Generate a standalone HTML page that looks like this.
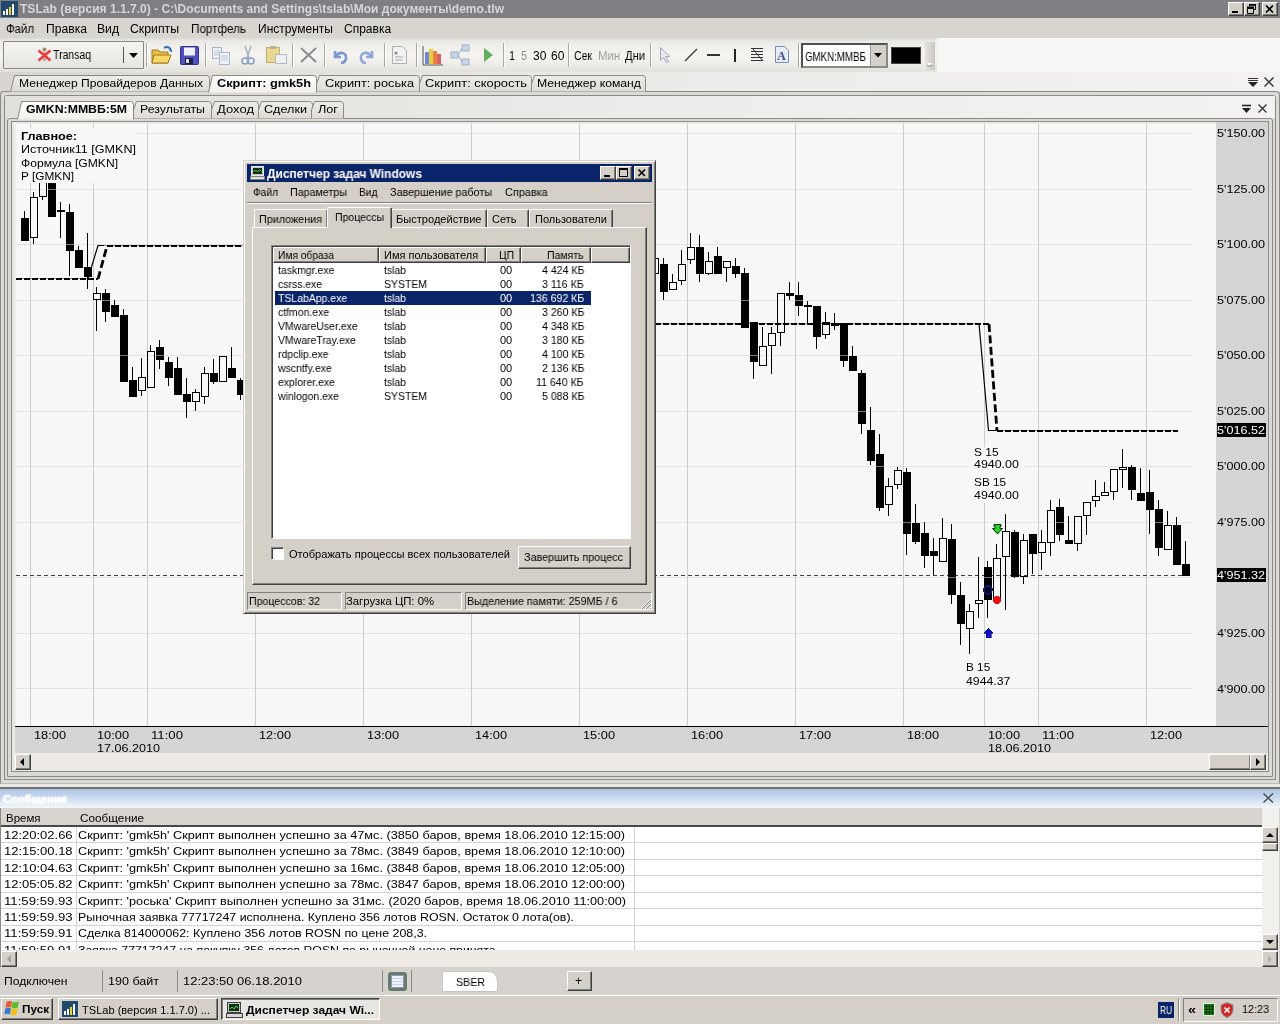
<!DOCTYPE html><html><head><meta charset="utf-8"><style>
*{box-sizing:border-box}
html,body{margin:0;padding:0;width:1280px;height:1024px;overflow:hidden;background:#d6d3ce;font-family:"Liberation Sans",sans-serif;font-size:12px;color:#000}
.a{position:absolute}
.t{position:absolute;white-space:pre;line-height:1;transform-origin:0 0;will-change:transform}
svg{overflow:visible}
</style></head><body><div class="a" style="left:0px;top:0px;width:1280px;height:18px;background:#817e83;"></div><div class="a" style="left:1px;top:1px;width:17px;height:16px;background:#1f4a6e;"></div><div class="a" style="left:3px;top:11px;width:2px;height:4px;background:#fff;"></div><div class="a" style="left:6px;top:9px;width:2px;height:6px;background:#fff;"></div><div class="a" style="left:9px;top:7px;width:2px;height:8px;background:#f0d020;"></div><div class="a" style="left:12px;top:4px;width:2px;height:11px;background:#fff;"></div><div class="t" style="left:20px;top:2.84px;font-size:12px;font-weight:700;color:#d8d5d8;font-family:'Liberation Sans';transform:scaleX(1.0040);">TSLab (версия 1.1.7.0) - C:\Documents and Settings\tslab\Мои документы\demo.tlw</div><div class="a" style="left:1228px;top:2px;width:16px;height:14px;background:#d4d0c8;border-top:1px solid #fff;border-left:1px solid #fff;border-right:1px solid #404040;border-bottom:1px solid #404040;box-shadow:inset -1px -1px #808080;"></div><div class="a" style="left:1244px;top:2px;width:16px;height:14px;background:#d4d0c8;border-top:1px solid #fff;border-left:1px solid #fff;border-right:1px solid #404040;border-bottom:1px solid #404040;box-shadow:inset -1px -1px #808080;"></div><div class="a" style="left:1262px;top:2px;width:16px;height:14px;background:#d4d0c8;border-top:1px solid #fff;border-left:1px solid #fff;border-right:1px solid #404040;border-bottom:1px solid #404040;box-shadow:inset -1px -1px #808080;"></div><div class="a" style="left:1232px;top:11px;width:6px;height:2px;background:#000;"></div><svg class="a" style="left:1244px;top:2px" width="16" height="14" viewBox="0 0 16 14"><path d="M3.5 6.5h6v5h-6z" fill="none" stroke="#000"/><path d="M3 5.5h7" stroke="#000" stroke-width="2"/><path d="M5.5 4.5V2.5h6v5h-2" fill="none" stroke="#000"/><path d="M5 3h7" stroke="#000" stroke-width="1.5"/></svg><svg class="a" style="left:1262px;top:2px" width="16" height="14" viewBox="0 0 16 14"><path d="M4 3.5L11 10.5M11 3.5L4 10.5" stroke="#000" stroke-width="1.7"/></svg><div class="a" style="left:0px;top:18px;width:1280px;height:20px;background:#d8d5d0;"></div><div class="t" style="left:6px;top:23.34px;font-size:12px;font-weight:400;color:#000;font-family:'Liberation Sans';transform:scaleX(0.9487);">Файл</div><div class="t" style="left:46px;top:23.34px;font-size:12px;font-weight:400;color:#000;font-family:'Liberation Sans';transform:scaleX(1.0112);">Правка</div><div class="t" style="left:97px;top:23.34px;font-size:12px;font-weight:400;color:#000;font-family:'Liberation Sans';transform:scaleX(1.0129);">Вид</div><div class="t" style="left:130px;top:23.34px;font-size:12px;font-weight:400;color:#000;font-family:'Liberation Sans';transform:scaleX(1.0225);">Скрипты</div><div class="t" style="left:191px;top:23.34px;font-size:12px;font-weight:400;color:#000;font-family:'Liberation Sans';transform:scaleX(0.9716);">Портфель</div><div class="t" style="left:258px;top:23.34px;font-size:12px;font-weight:400;color:#000;font-family:'Liberation Sans';transform:scaleX(1.0023);">Инструменты</div><div class="t" style="left:344px;top:23.34px;font-size:12px;font-weight:400;color:#000;font-family:'Liberation Sans';transform:scaleX(0.9983);">Справка</div><div class="a" style="left:0px;top:38px;width:1280px;height:34px;background:#f6f6f5;"></div><div class="a" style="left:0px;top:38px;width:937px;height:34px;background:linear-gradient(#dedbd5,#eceae6 10%,#f4f3f0 45%,#f2f1ed 65%,#e4e1db 100%);"></div><div class="a" style="left:3px;top:41px;width:141px;height:28px;border:1px solid #8a8780;border-radius:1px;background:linear-gradient(#f4f3f0,#eeede9 50%,#e6e4df)"></div><svg class="a" style="left:36px;top:46px" width="17" height="17" viewBox="0 0 17 17"><circle cx="8.5" cy="3.5" r="2" fill="#9a9070"/><path d="M7 6h3v9h-3z" fill="#a09a80" opacity=".7"/><path d="M2.5 4.5L14.5 14.5M14.5 4.5L2.5 14.5" stroke="#f03838" stroke-width="2.4"/></svg><div class="t" style="left:53px;top:48.84px;font-size:12px;font-weight:400;color:#000;font-family:'Liberation Sans';transform:scaleX(0.8720);">Transaq</div><div class="a" style="left:123px;top:47px;width:1px;height:16px;background:#555;"></div><svg class="a" style="left:129px;top:53px" width="10" height="6" viewBox="0 0 10 6"><path d="M0 0h9L4.5 5z" fill="#000"/></svg><div class="a" style="left:146px;top:43px;width:1px;height:24px;background:#aaa8a2;"></div><div class="a" style="left:147px;top:43px;width:1px;height:24px;background:#fff;"></div><div class="a" style="left:205px;top:43px;width:1px;height:24px;background:#aaa8a2;"></div><div class="a" style="left:206px;top:43px;width:1px;height:24px;background:#fff;"></div><div class="a" style="left:292px;top:43px;width:1px;height:24px;background:#aaa8a2;"></div><div class="a" style="left:293px;top:43px;width:1px;height:24px;background:#fff;"></div><div class="a" style="left:324px;top:43px;width:1px;height:24px;background:#aaa8a2;"></div><div class="a" style="left:325px;top:43px;width:1px;height:24px;background:#fff;"></div><div class="a" style="left:384px;top:43px;width:1px;height:24px;background:#aaa8a2;"></div><div class="a" style="left:385px;top:43px;width:1px;height:24px;background:#fff;"></div><div class="a" style="left:416px;top:43px;width:1px;height:24px;background:#aaa8a2;"></div><div class="a" style="left:417px;top:43px;width:1px;height:24px;background:#fff;"></div><div class="a" style="left:503px;top:43px;width:1px;height:24px;background:#aaa8a2;"></div><div class="a" style="left:504px;top:43px;width:1px;height:24px;background:#fff;"></div><div class="a" style="left:568px;top:43px;width:1px;height:24px;background:#aaa8a2;"></div><div class="a" style="left:569px;top:43px;width:1px;height:24px;background:#fff;"></div><div class="a" style="left:650px;top:43px;width:1px;height:24px;background:#aaa8a2;"></div><div class="a" style="left:651px;top:43px;width:1px;height:24px;background:#fff;"></div><div class="a" style="left:798px;top:43px;width:1px;height:24px;background:#aaa8a2;"></div><div class="a" style="left:799px;top:43px;width:1px;height:24px;background:#fff;"></div><svg class="a" style="left:151px;top:45px" width="22" height="20" viewBox="0 0 22 20"><path d="M1 5h6l2 2h8v11H1z" fill="#e8c050" stroke="#a07818" stroke-width="1"/><path d="M3 10h17l-3 8H1z" fill="#f8d868" stroke="#a07818"/><path d="M13 3c3-2 6-1 7 3" stroke="#3070b0" stroke-width="2" fill="none"/><path d="M18 6l3 1 0-3z" fill="#3070b0"/></svg><svg class="a" style="left:180px;top:46px" width="19" height="19" viewBox="0 0 19 19"><rect x="0.5" y="0.5" width="18" height="18" rx="1" fill="#5050c0" stroke="#303080"/><rect x="4" y="1.5" width="11" height="8" fill="#f0f0f8"/><rect x="5" y="12" width="8" height="6" fill="#202040"/><rect x="6" y="13" width="3" height="4" fill="#ddd"/></svg><svg class="a" style="left:211px;top:46px" width="20" height="19" viewBox="0 0 20 19"><rect x="1.5" y="1.5" width="9" height="11" fill="#eef2f8" stroke="#a8b4c8"/><rect x="8.5" y="6.5" width="10" height="12" fill="#eef2f8" stroke="#a8b4c8"/><path d="M10 10h7M10 12h7M10 14h7M3 5h6M3 7h6M3 9h6" stroke="#c0c8d8"/></svg><svg class="a" style="left:239px;top:45px" width="18" height="21" viewBox="0 0 18 21"><path d="M6 1L10 13M12 1L8 13" stroke="#a8b0c0" stroke-width="1.5"/><circle cx="6" cy="16" r="3" fill="none" stroke="#8aa0c8" stroke-width="1.6"/><circle cx="12" cy="16" r="3" fill="none" stroke="#8aa0c8" stroke-width="1.6"/></svg><svg class="a" style="left:265px;top:45px" width="23" height="20" viewBox="0 0 23 20"><rect x="1.5" y="2.5" width="13" height="15" fill="#e8d890" stroke="#c0b070"/><rect x="5" y="1" width="6" height="3" fill="#b8b090"/><rect x="10.5" y="9.5" width="11" height="9" fill="#eef0f4" stroke="#b0b8c4"/></svg><svg class="a" style="left:299px;top:46px" width="19" height="18" viewBox="0 0 19 18"><path d="M2 2L17 16M17 2L2 16" stroke="#8c8c8c" stroke-width="2"/></svg><svg class="a" style="left:331px;top:47px" width="18" height="17" viewBox="0 0 18 17"><path d="M4 4v6h6" fill="none" stroke="#7c98d0" stroke-width="2.6"/><path d="M5 9c3-5 11-4 10 3c-1 3-3 4-5 4" fill="none" stroke="#7c98d0" stroke-width="2.6"/></svg><svg class="a" style="left:358px;top:47px" width="18" height="17" viewBox="0 0 18 17"><path d="M14 4v6h-6" fill="none" stroke="#90a8d8" stroke-width="2.6"/><path d="M13 9c-3-5-11-4-10 3c1 3 3 4 5 4" fill="none" stroke="#90a8d8" stroke-width="2.6"/></svg><svg class="a" style="left:391px;top:45px" width="17" height="20" viewBox="0 0 17 20"><path d="M1.5 1.5h10l4 4v13h-14z" fill="#f2f2f2" stroke="#b0b0b0"/><circle cx="5" cy="8" r="1.6" fill="#909090"/><path d="M4 12h8M4 15h8" stroke="#a8a8a8"/></svg><svg class="a" style="left:422px;top:45px" width="22" height="21" viewBox="0 0 22 21"><path d="M1 1v19h20" stroke="#555" fill="none"/><rect x="3" y="7" width="4" height="12" fill="#7088d8"/><rect x="7" y="4" width="4" height="15" fill="#e8d040"/><rect x="11" y="6" width="4" height="13" fill="#e88040"/><rect x="15" y="9" width="4" height="10" fill="#d86060"/></svg><svg class="a" style="left:449px;top:44px" width="22" height="23" viewBox="0 0 22 23"><rect x="13" y="1" width="7" height="6" fill="#c8d4e8" stroke="#a0b0c8"/><rect x="2" y="8" width="7" height="6" fill="#c8d4e8" stroke="#a0b0c8"/><rect x="13" y="15" width="7" height="6" fill="#c8d4e8" stroke="#a0b0c8"/><path d="M9 11L13 4M9 11L13 18" stroke="#a0b0c8"/></svg><svg class="a" style="left:483px;top:47px" width="11" height="16" viewBox="0 0 11 16"><path d="M1 1L10 8L1 15z" fill="#60b060"/></svg><div class="t" style="left:509px;top:50.34px;font-size:12px;font-weight:400;color:#000;font-family:'Liberation Sans';transform:scaleX(0.8972);">1</div><div class="t" style="left:521px;top:50.34px;font-size:12px;font-weight:400;color:#8c8c8c;font-family:'Liberation Sans';transform:scaleX(0.8972);">5</div><div class="t" style="left:533px;top:50.34px;font-size:12px;font-weight:400;color:#000;font-family:'Liberation Sans';transform:scaleX(0.9731);">30</div><div class="t" style="left:551px;top:50.34px;font-size:12px;font-weight:400;color:#000;font-family:'Liberation Sans';transform:scaleX(0.9731);">60</div><div class="t" style="left:574px;top:50.34px;font-size:12px;font-weight:400;color:#000;font-family:'Liberation Sans';transform:scaleX(0.8741);">Сек</div><div class="t" style="left:598px;top:50.34px;font-size:12px;font-weight:400;color:#9a9a9a;font-family:'Liberation Sans';transform:scaleX(0.9431);">Мин</div><div class="t" style="left:625px;top:50.34px;font-size:12px;font-weight:400;color:#000;font-family:'Liberation Sans';transform:scaleX(0.9316);">Дни</div><svg class="a" style="left:659px;top:46px" width="13" height="18" viewBox="0 0 13 18"><path d="M1.5 1.5v13l3-3 3 5 2-1-3-5h4z" fill="#e8ecf4" stroke="#a0a8b8"/></svg><svg class="a" style="left:684px;top:47px" width="15" height="16" viewBox="0 0 15 16"><path d="M1 14L13 2" stroke="#333" stroke-width="1.2"/></svg><div class="a" style="left:707px;top:54px;width:13px;height:2px;background:#333;"></div><div class="a" style="left:734px;top:49px;width:2px;height:13px;background:#222;"></div><svg class="a" style="left:750px;top:47px" width="14" height="15" viewBox="0 0 14 15"><path d="M1 1.5h12M1 4.5h12M1 7.5h12M1 10.5h12M1 13.5h12" stroke="#333"/><path d="M2 1L13 14" stroke="#333" stroke-width="1"/></svg><svg class="a" style="left:774px;top:45px" width="16" height="19" viewBox="0 0 16 19"><path d="M1.5 1.5h9l4 4v12h-13z" fill="#e8eef8" stroke="#7890b8"/><text x="3" y="15" font-family="Liberation Serif" font-weight="bold" font-size="12" fill="#3a5088">A</text></svg><div class="a" style="left:801px;top:43px;width:87px;height:25px;background:#fff;border:2px solid #505050;border-right-color:#888;border-bottom-color:#888"></div><div class="t" style="left:805px;top:50.84px;font-size:12px;font-weight:400;color:#000;font-family:'Liberation Sans';transform:scaleX(0.8110);">GMKN:MMBБ</div><div class="a" style="left:870px;top:45px;width:16px;height:21px;background:#d4d0c8;border-left:1px solid #999"></div><svg class="a" style="left:874px;top:53px" width="9" height="5" viewBox="0 0 9 5"><path d="M0 0h8L4 4.5z" fill="#000"/></svg><div class="a" style="left:891px;top:47px;width:30px;height:17px;background:#000;border:1px solid #444"></div><div class="a" style="left:925px;top:42px;width:10px;height:28px;background:linear-gradient(90deg,#e6e3de,#c8c5bf);"></div><svg class="a" style="left:927px;top:63px" width="6" height="5" viewBox="0 0 6 5"><path d="M0 0h5L2.5 3z" fill="#fff"/><path d="M0 3h5" stroke="#888"/></svg><div class="a" style="left:0px;top:72px;width:1280px;height:20px;background:linear-gradient(90deg,#d9d6d1,#e6e4e0 30%,#efedeb 60%,#f3f1f1);"></div><div class="a" style="left:0;top:91px;width:1280px;height:693px;border:1px solid #8d8a84;border-bottom-color:#bdbab4;border-radius:4px 4px 0 0;background:#dcdad6"></div><svg class="a" style="left:10px;top:75px" width="200" height="18" viewBox="0 0 200 18"><defs><linearGradient id="gA" x1="0" y1="0" x2="0" y2="1"><stop offset="0" stop-color="#fdfdfc"/><stop offset="1" stop-color="#f1f0ed"/></linearGradient><linearGradient id="gI" x1="0" y1="0" x2="0" y2="1"><stop offset="0" stop-color="#edece8"/><stop offset="1" stop-color="#dedbd5"/></linearGradient></defs><path d="M0.5 16.5 L4.5 0.5 H196.5 Q199.5 0.5 199.5 3.5 V16.5" fill="url(#gI)" stroke="#8d8a84"/></svg><div class="t" style="left:19px;top:78.27px;font-size:11.5px;font-weight:400;color:#000;font-family:'Liberation Sans';transform:scaleX(1.0517);">Менеджер Провайдеров Данных</div><svg class="a" style="left:316px;top:75px" width="104" height="18" viewBox="0 0 104 18"><defs><linearGradient id="gA" x1="0" y1="0" x2="0" y2="1"><stop offset="0" stop-color="#fdfdfc"/><stop offset="1" stop-color="#f1f0ed"/></linearGradient><linearGradient id="gI" x1="0" y1="0" x2="0" y2="1"><stop offset="0" stop-color="#edece8"/><stop offset="1" stop-color="#dedbd5"/></linearGradient></defs><path d="M0.5 16.5 V9 L3.5 0.5 H100.5 Q103.5 0.5 103.5 3.5 V16.5" fill="url(#gI)" stroke="#8d8a84"/></svg><div class="t" style="left:325px;top:78.27px;font-size:11.5px;font-weight:400;color:#000;font-family:'Liberation Sans';transform:scaleX(1.1088);">Скрипт: роська</div><svg class="a" style="left:419px;top:75px" width="113" height="18" viewBox="0 0 113 18"><defs><linearGradient id="gA" x1="0" y1="0" x2="0" y2="1"><stop offset="0" stop-color="#fdfdfc"/><stop offset="1" stop-color="#f1f0ed"/></linearGradient><linearGradient id="gI" x1="0" y1="0" x2="0" y2="1"><stop offset="0" stop-color="#edece8"/><stop offset="1" stop-color="#dedbd5"/></linearGradient></defs><path d="M0.5 16.5 V9 L3.5 0.5 H109.5 Q112.5 0.5 112.5 3.5 V16.5" fill="url(#gI)" stroke="#8d8a84"/></svg><div class="t" style="left:425px;top:78.27px;font-size:11.5px;font-weight:400;color:#000;font-family:'Liberation Sans';transform:scaleX(1.1190);">Скрипт: скорость</div><svg class="a" style="left:531px;top:75px" width="115" height="18" viewBox="0 0 115 18"><defs><linearGradient id="gA" x1="0" y1="0" x2="0" y2="1"><stop offset="0" stop-color="#fdfdfc"/><stop offset="1" stop-color="#f1f0ed"/></linearGradient><linearGradient id="gI" x1="0" y1="0" x2="0" y2="1"><stop offset="0" stop-color="#edece8"/><stop offset="1" stop-color="#dedbd5"/></linearGradient></defs><path d="M0.5 16.5 V9 L3.5 0.5 H111.5 Q114.5 0.5 114.5 3.5 V16.5" fill="url(#gI)" stroke="#8d8a84"/></svg><div class="t" style="left:537px;top:78.27px;font-size:11.5px;font-weight:400;color:#000;font-family:'Liberation Sans';transform:scaleX(1.0621);">Менеджер команд</div><svg class="a" style="left:208px;top:75px" width="109" height="19" viewBox="0 0 109 19"><defs><linearGradient id="gA" x1="0" y1="0" x2="0" y2="1"><stop offset="0" stop-color="#fdfdfc"/><stop offset="1" stop-color="#f1f0ed"/></linearGradient><linearGradient id="gI" x1="0" y1="0" x2="0" y2="1"><stop offset="0" stop-color="#edece8"/><stop offset="1" stop-color="#dedbd5"/></linearGradient></defs><path d="M0.5 17.5 L4.5 0.5 H105.5 Q108.5 0.5 108.5 3.5 V17.5" fill="url(#gA)" stroke="#8d8a84"/></svg><div class="t" style="left:217px;top:78.27px;font-size:11.5px;font-weight:700;color:#000;font-family:'Liberation Sans';transform:scaleX(1.1081);">Скрипт: gmk5h</div><svg class="a" style="left:1247px;top:77px" width="12" height="11" viewBox="0 0 12 11"><path d="M1 1.5h10M1 3.5h10" stroke="#333"/><path d="M1 5h10L6 10z" fill="#222"/></svg><svg class="a" style="left:1263px;top:76px" width="12" height="12" viewBox="0 0 12 12"><path d="M1.5 1.5L10.5 10.5M10.5 1.5L1.5 10.5" stroke="#333" stroke-width="1.4"/></svg><div class="a" style="left:4px;top:95px;width:1272px;height:685px;border:1px solid #8d8a84;border-radius:3px 3px 0 0;background:#dcdad6"></div><div class="a" style="left:5px;top:96px;width:1270px;height:22px;background:linear-gradient(90deg,#e2e0dc,#e9e7e4 30%,#f0eeed 60%,#f3f1f1);"></div><div class="a" style="left:7px;top:118px;width:1266px;height:659px;border:1px solid #8d8a84;border-radius:3px 3px 0 0;background:#dcdad6"></div><svg class="a" style="left:133px;top:101px" width="79" height="19" viewBox="0 0 79 19"><defs><linearGradient id="gA" x1="0" y1="0" x2="0" y2="1"><stop offset="0" stop-color="#fdfdfc"/><stop offset="1" stop-color="#f1f0ed"/></linearGradient><linearGradient id="gI" x1="0" y1="0" x2="0" y2="1"><stop offset="0" stop-color="#edece8"/><stop offset="1" stop-color="#dedbd5"/></linearGradient></defs><path d="M0.5 17.5 V9 L3.5 0.5 H75.5 Q78.5 0.5 78.5 3.5 V17.5" fill="url(#gI)" stroke="#8d8a84"/></svg><div class="t" style="left:140px;top:104.27px;font-size:11.5px;font-weight:400;color:#000;font-family:'Liberation Sans';transform:scaleX(1.0730);">Результаты</div><svg class="a" style="left:211px;top:101px" width="48" height="19" viewBox="0 0 48 19"><defs><linearGradient id="gA" x1="0" y1="0" x2="0" y2="1"><stop offset="0" stop-color="#fdfdfc"/><stop offset="1" stop-color="#f1f0ed"/></linearGradient><linearGradient id="gI" x1="0" y1="0" x2="0" y2="1"><stop offset="0" stop-color="#edece8"/><stop offset="1" stop-color="#dedbd5"/></linearGradient></defs><path d="M0.5 17.5 V9 L3.5 0.5 H44.5 Q47.5 0.5 47.5 3.5 V17.5" fill="url(#gI)" stroke="#8d8a84"/></svg><div class="t" style="left:217px;top:104.27px;font-size:11.5px;font-weight:400;color:#000;font-family:'Liberation Sans';transform:scaleX(1.1325);">Доход</div><svg class="a" style="left:258px;top:101px" width="55" height="19" viewBox="0 0 55 19"><defs><linearGradient id="gA" x1="0" y1="0" x2="0" y2="1"><stop offset="0" stop-color="#fdfdfc"/><stop offset="1" stop-color="#f1f0ed"/></linearGradient><linearGradient id="gI" x1="0" y1="0" x2="0" y2="1"><stop offset="0" stop-color="#edece8"/><stop offset="1" stop-color="#dedbd5"/></linearGradient></defs><path d="M0.5 17.5 V9 L3.5 0.5 H51.5 Q54.5 0.5 54.5 3.5 V17.5" fill="url(#gI)" stroke="#8d8a84"/></svg><div class="t" style="left:264px;top:104.27px;font-size:11.5px;font-weight:400;color:#000;font-family:'Liberation Sans';transform:scaleX(1.0969);">Сделки</div><svg class="a" style="left:311px;top:101px" width="33" height="19" viewBox="0 0 33 19"><defs><linearGradient id="gA" x1="0" y1="0" x2="0" y2="1"><stop offset="0" stop-color="#fdfdfc"/><stop offset="1" stop-color="#f1f0ed"/></linearGradient><linearGradient id="gI" x1="0" y1="0" x2="0" y2="1"><stop offset="0" stop-color="#edece8"/><stop offset="1" stop-color="#dedbd5"/></linearGradient></defs><path d="M0.5 17.5 V9 L3.5 0.5 H29.5 Q32.5 0.5 32.5 3.5 V17.5" fill="url(#gI)" stroke="#8d8a84"/></svg><div class="t" style="left:318px;top:104.27px;font-size:11.5px;font-weight:400;color:#000;font-family:'Liberation Sans';transform:scaleX(1.1025);">Лог</div><svg class="a" style="left:17px;top:101px" width="117" height="20" viewBox="0 0 117 20"><defs><linearGradient id="gA" x1="0" y1="0" x2="0" y2="1"><stop offset="0" stop-color="#fdfdfc"/><stop offset="1" stop-color="#f1f0ed"/></linearGradient><linearGradient id="gI" x1="0" y1="0" x2="0" y2="1"><stop offset="0" stop-color="#edece8"/><stop offset="1" stop-color="#dedbd5"/></linearGradient></defs><path d="M0.5 18.5 L4.5 0.5 H113.5 Q116.5 0.5 116.5 3.5 V18.5" fill="url(#gA)" stroke="#8d8a84"/></svg><div class="t" style="left:26px;top:104.27px;font-size:11.5px;font-weight:700;color:#000;font-family:'Liberation Sans';transform:scaleX(1.0688);">GMKN:MMBБ:5M</div><svg class="a" style="left:1241px;top:104px" width="11" height="10" viewBox="0 0 11 10"><path d="M1 1.5h9" stroke="#222" stroke-width="1.6"/><path d="M1 4h9L5.5 9z" fill="#222"/></svg><svg class="a" style="left:1257px;top:103px" width="11" height="11" viewBox="0 0 11 11"><path d="M1.5 1.5L9.5 9.5M9.5 1.5L1.5 9.5" stroke="#333" stroke-width="1.3"/></svg><div class="a" style="left:11px;top:121px;width:1258px;height:651px;border:1px solid #8d8a84;background:linear-gradient(90deg,#e4e2de,#ecebe8 3px,#f2f2f2 4px)"></div><svg class="a" style="left:12px;top:122px" width="1256" height="649" shape-rendering="crispEdges"><rect x="0" y="0" width="1256" height="2" fill="#ecebe8" /><rect x="4" y="2" width="1200" height="602" fill="#f7f7f7" /><rect x="4" y="11" width="1176" height="1" fill="#e4e4e4" /><rect x="4" y="67" width="1176" height="1" fill="#e4e4e4" /><rect x="4" y="122" width="1176" height="1" fill="#e4e4e4" /><rect x="4" y="178" width="1176" height="1" fill="#e4e4e4" /><rect x="4" y="233" width="1176" height="1" fill="#e4e4e4" /><rect x="4" y="289" width="1176" height="1" fill="#e4e4e4" /><rect x="4" y="344" width="1176" height="1" fill="#e4e4e4" /><rect x="4" y="400" width="1176" height="1" fill="#e4e4e4" /><rect x="4" y="455" width="1176" height="1" fill="#e4e4e4" /><rect x="4" y="511" width="1176" height="1" fill="#e4e4e4" /><rect x="4" y="566" width="1176" height="1" fill="#e4e4e4" /><rect x="18" y="2" width="1" height="602" fill="#cdcdcd" /><rect x="81" y="2" width="1" height="602" fill="#cdcdcd" /><rect x="135" y="2" width="1" height="602" fill="#cdcdcd" /><rect x="243" y="2" width="1" height="602" fill="#cdcdcd" /><rect x="351" y="2" width="1" height="602" fill="#cdcdcd" /><rect x="459" y="2" width="1" height="602" fill="#cdcdcd" /><rect x="567" y="2" width="1" height="602" fill="#cdcdcd" /><rect x="675" y="2" width="1" height="602" fill="#cdcdcd" /><rect x="783" y="2" width="1" height="602" fill="#cdcdcd" /><rect x="891" y="2" width="1" height="602" fill="#cdcdcd" /><rect x="972" y="2" width="1" height="602" fill="#cdcdcd" /><rect x="1026" y="2" width="1" height="602" fill="#cdcdcd" /><rect x="1134" y="2" width="1" height="602" fill="#cdcdcd" /><path d="M4 453.5L1180 453.5" stroke="#404040" stroke-width="1" fill="none" stroke-dasharray="4 3"/><path d="M4 156.5L76 156.5" stroke="#888" stroke-width="1" fill="none" /><path d="M86 123.5L231 123.5" stroke="#888" stroke-width="1" fill="none" /><path d="M76 156.5 L86 123.5 L92 123.5" stroke="#000" stroke-width="1.2" fill="none" shape-rendering="geometricPrecision"/><path d="M4 157L86 157" stroke="#000" stroke-width="2" fill="none" stroke-dasharray="6 2"/><path d="M86 157L95 124" stroke="#000" stroke-width="2.8" fill="none" stroke-dasharray="8 3.5" shape-rendering="geometricPrecision"/><path d="M95 124L231 124" stroke="#000" stroke-width="2" fill="none" stroke-dasharray="6 2"/><path d="M643 201.5L967 201.5" stroke="#888" stroke-width="1" fill="none" /><path d="M976.5 308.5L1166 308.5" stroke="#888" stroke-width="1" fill="none" /><path d="M967 201.5 L976.5 308.5 L985 308.5" stroke="#000" stroke-width="1.2" fill="none" shape-rendering="geometricPrecision"/><path d="M643 202L977 202" stroke="#000" stroke-width="2" fill="none" stroke-dasharray="6 2"/><path d="M977 202L985 309" stroke="#000" stroke-width="2.8" fill="none" stroke-dasharray="8 3.5" shape-rendering="geometricPrecision"/><path d="M985 309L1166 309" stroke="#000" stroke-width="2" fill="none" stroke-dasharray="6 2"/><rect x="12" y="89" width="1" height="7" fill="#000" /><rect x="9" y="96" width="8" height="23" fill="#000" /><rect x="21" y="70" width="1" height="5" fill="#000" /><rect x="21" y="116" width="1" height="6" fill="#000" /><rect x="18.5" y="75.5" width="7" height="40" fill="none" stroke="#000" stroke-width="1"/><rect x="30" y="75" width="1" height="3" fill="#000" /><rect x="27.5" y="38.5" width="7" height="36" fill="none" stroke="#000" stroke-width="1"/><rect x="36" y="38" width="8" height="57" fill="#000" /><rect x="36" y="67" width="8" height="1" fill="#777" /><rect x="48" y="80" width="1" height="8" fill="#000" /><rect x="48" y="90" width="1" height="26" fill="#000" /><rect x="45" y="88" width="8" height="2" fill="#000" /><rect x="57" y="82" width="1" height="8" fill="#000" /><rect x="57" y="129" width="1" height="25" fill="#000" /><rect x="54" y="90" width="8" height="39" fill="#000" /><rect x="54" y="122" width="8" height="1" fill="#777" /><rect x="66" y="124" width="1" height="4" fill="#000" /><rect x="63" y="128" width="8" height="18" fill="#000" /><rect x="75" y="111" width="1" height="34" fill="#000" /><rect x="75" y="155" width="1" height="12" fill="#000" /><rect x="72" y="145" width="8" height="10" fill="#000" /><rect x="84" y="165" width="1" height="6" fill="#000" /><rect x="84" y="178" width="1" height="31" fill="#000" /><rect x="81.5" y="171.5" width="7" height="6" fill="none" stroke="#000" stroke-width="1"/><rect x="93" y="167" width="1" height="4" fill="#000" /><rect x="93" y="190" width="1" height="10" fill="#000" /><rect x="90" y="171" width="8" height="19" fill="#000" /><rect x="90" y="178" width="8" height="1" fill="#777" /><rect x="102" y="178" width="1" height="5" fill="#000" /><rect x="99" y="183" width="8" height="12" fill="#000" /><rect x="111" y="187" width="1" height="6" fill="#000" /><rect x="108" y="193" width="8" height="67" fill="#000" /><rect x="108" y="233" width="8" height="1" fill="#777" /><rect x="120" y="245" width="1" height="13" fill="#000" /><rect x="117" y="258" width="8" height="17" fill="#000" /><rect x="129" y="236" width="1" height="19" fill="#000" /><rect x="129" y="269" width="1" height="5" fill="#000" /><rect x="126.5" y="255.5" width="7" height="13" fill="none" stroke="#000" stroke-width="1"/><rect x="138" y="223" width="1" height="6" fill="#000" /><rect x="135.5" y="229.5" width="7" height="36" fill="none" stroke="#000" stroke-width="1"/><rect x="147" y="218" width="1" height="7" fill="#000" /><rect x="147" y="238" width="1" height="9" fill="#000" /><rect x="144" y="225" width="8" height="13" fill="#000" /><rect x="144" y="233" width="8" height="1" fill="#777" /><rect x="156" y="235" width="1" height="5" fill="#000" /><rect x="156" y="256" width="1" height="8" fill="#000" /><rect x="153" y="240" width="8" height="16" fill="#000" /><rect x="165" y="235" width="1" height="11" fill="#000" /><rect x="162" y="246" width="8" height="27" fill="#000" /><rect x="174" y="256" width="1" height="16" fill="#000" /><rect x="174" y="280" width="1" height="16" fill="#000" /><rect x="171" y="272" width="8" height="8" fill="#000" /><rect x="183" y="267" width="1" height="3" fill="#000" /><rect x="183" y="280" width="1" height="9" fill="#000" /><rect x="180.5" y="270.5" width="7" height="9" fill="none" stroke="#000" stroke-width="1"/><rect x="192" y="245" width="1" height="6" fill="#000" /><rect x="192" y="275" width="1" height="7" fill="#000" /><rect x="189.5" y="251.5" width="7" height="23" fill="none" stroke="#000" stroke-width="1"/><rect x="201" y="237" width="1" height="14" fill="#000" /><rect x="201" y="260" width="1" height="2" fill="#000" /><rect x="198" y="251" width="8" height="9" fill="#000" /><rect x="207.5" y="234.5" width="7" height="25" fill="none" stroke="#000" stroke-width="1"/><rect x="219" y="225" width="1" height="21" fill="#000" /><rect x="216" y="246" width="8" height="10" fill="#000" /><rect x="228" y="256" width="1" height="2" fill="#000" /><rect x="228" y="273" width="1" height="5" fill="#000" /><rect x="225" y="258" width="8" height="15" fill="#000" /><rect x="639.5" y="136.5" width="7" height="15" fill="none" stroke="#000" stroke-width="1"/><rect x="651" y="136" width="1" height="6" fill="#000" /><rect x="651" y="170" width="1" height="8" fill="#000" /><rect x="648" y="142" width="8" height="28" fill="#000" /><rect x="660" y="152" width="1" height="8" fill="#000" /><rect x="657.5" y="160.5" width="7" height="7" fill="none" stroke="#000" stroke-width="1"/><rect x="669" y="128" width="1" height="14" fill="#000" /><rect x="669" y="159" width="1" height="4" fill="#000" /><rect x="666.5" y="142.5" width="7" height="16" fill="none" stroke="#000" stroke-width="1"/><rect x="678" y="111" width="1" height="14" fill="#000" /><rect x="678" y="138" width="1" height="4" fill="#000" /><rect x="675.5" y="125.5" width="7" height="12" fill="none" stroke="#000" stroke-width="1"/><rect x="687" y="113" width="1" height="12" fill="#000" /><rect x="687" y="152" width="1" height="8" fill="#000" /><rect x="684" y="125" width="8" height="27" fill="#000" /><rect x="696" y="130" width="1" height="9" fill="#000" /><rect x="696" y="152" width="1" height="1" fill="#000" /><rect x="693.5" y="139.5" width="7" height="12" fill="none" stroke="#000" stroke-width="1"/><rect x="705" y="125" width="1" height="9" fill="#000" /><rect x="702" y="134" width="8" height="18" fill="#000" /><rect x="714" y="146" width="1" height="14" fill="#000" /><rect x="711.5" y="139.5" width="7" height="6" fill="none" stroke="#000" stroke-width="1"/><rect x="723" y="136" width="1" height="8" fill="#000" /><rect x="723" y="152" width="1" height="4" fill="#000" /><rect x="720" y="144" width="8" height="8" fill="#000" /><rect x="732" y="146" width="1" height="5" fill="#000" /><rect x="729" y="151" width="8" height="55" fill="#000" /><rect x="729" y="178" width="8" height="1" fill="#777" /><rect x="741" y="240" width="1" height="17" fill="#000" /><rect x="738" y="200" width="8" height="40" fill="#000" /><rect x="738" y="233" width="8" height="1" fill="#777" /><rect x="750" y="205" width="1" height="19" fill="#000" /><rect x="750" y="244" width="1" height="0" fill="#000" /><rect x="747.5" y="224.5" width="7" height="19" fill="none" stroke="#000" stroke-width="1"/><rect x="759" y="205" width="1" height="6" fill="#000" /><rect x="759" y="224" width="1" height="28" fill="#000" /><rect x="756.5" y="211.5" width="7" height="12" fill="none" stroke="#000" stroke-width="1"/><rect x="768" y="211" width="1" height="13" fill="#000" /><rect x="765.5" y="171.5" width="7" height="39" fill="none" stroke="#000" stroke-width="1"/><rect x="777" y="160" width="1" height="11" fill="#000" /><rect x="777" y="174" width="1" height="4" fill="#000" /><rect x="774" y="171" width="8" height="3" fill="#000" /><rect x="786" y="160" width="1" height="13" fill="#000" /><rect x="786" y="184" width="1" height="10" fill="#000" /><rect x="783" y="173" width="8" height="11" fill="#000" /><rect x="783" y="178" width="8" height="1" fill="#777" /><rect x="795" y="179" width="1" height="4" fill="#000" /><rect x="795" y="185" width="1" height="16" fill="#000" /><rect x="792" y="183" width="8" height="2" fill="#000" /><rect x="804" y="215" width="1" height="12" fill="#000" /><rect x="801" y="184" width="8" height="31" fill="#000" /><rect x="813" y="190" width="1" height="10" fill="#000" /><rect x="813" y="213" width="1" height="4" fill="#000" /><rect x="810.5" y="200.5" width="7" height="12" fill="none" stroke="#000" stroke-width="1"/><rect x="822" y="191" width="1" height="10" fill="#000" /><rect x="822" y="204" width="1" height="4" fill="#000" /><rect x="819" y="201" width="8" height="3" fill="#000" /><rect x="831" y="239" width="1" height="6" fill="#000" /><rect x="828" y="201" width="8" height="38" fill="#000" /><rect x="828" y="233" width="8" height="1" fill="#777" /><rect x="840" y="224" width="1" height="10" fill="#000" /><rect x="837" y="234" width="8" height="15" fill="#000" /><rect x="849" y="248" width="1" height="3" fill="#000" /><rect x="849" y="302" width="1" height="10" fill="#000" /><rect x="846" y="251" width="8" height="51" fill="#000" /><rect x="846" y="289" width="8" height="1" fill="#777" /><rect x="858" y="285" width="1" height="23" fill="#000" /><rect x="858" y="339" width="1" height="4" fill="#000" /><rect x="855" y="308" width="8" height="31" fill="#000" /><rect x="867" y="312" width="1" height="20" fill="#000" /><rect x="867" y="386" width="1" height="3" fill="#000" /><rect x="864" y="332" width="8" height="54" fill="#000" /><rect x="864" y="344" width="8" height="1" fill="#777" /><rect x="876" y="356" width="1" height="8" fill="#000" /><rect x="876" y="383" width="1" height="11" fill="#000" /><rect x="873.5" y="364.5" width="7" height="18" fill="none" stroke="#000" stroke-width="1"/><rect x="885" y="345" width="1" height="3" fill="#000" /><rect x="885" y="363" width="1" height="4" fill="#000" /><rect x="882.5" y="348.5" width="7" height="14" fill="none" stroke="#000" stroke-width="1"/><rect x="894" y="346" width="1" height="4" fill="#000" /><rect x="894" y="412" width="1" height="21" fill="#000" /><rect x="891" y="350" width="8" height="62" fill="#000" /><rect x="891" y="400" width="8" height="1" fill="#777" /><rect x="903" y="382" width="1" height="19" fill="#000" /><rect x="903" y="420" width="1" height="2" fill="#000" /><rect x="900" y="401" width="8" height="19" fill="#000" /><rect x="912" y="400" width="1" height="11" fill="#000" /><rect x="912" y="434" width="1" height="12" fill="#000" /><rect x="909" y="411" width="8" height="23" fill="#000" /><rect x="921" y="416" width="1" height="13" fill="#000" /><rect x="921" y="434" width="1" height="19" fill="#000" /><rect x="918" y="429" width="8" height="5" fill="#000" /><rect x="930" y="396" width="1" height="20" fill="#000" /><rect x="927.5" y="416.5" width="7" height="23" fill="none" stroke="#000" stroke-width="1"/><rect x="939" y="402" width="1" height="15" fill="#000" /><rect x="939" y="473" width="1" height="9" fill="#000" /><rect x="936" y="417" width="8" height="56" fill="#000" /><rect x="936" y="455" width="8" height="1" fill="#777" /><rect x="948" y="460" width="1" height="13" fill="#000" /><rect x="948" y="502" width="1" height="21" fill="#000" /><rect x="945" y="473" width="8" height="29" fill="#000" /><rect x="957" y="482" width="1" height="7" fill="#000" /><rect x="957" y="507" width="1" height="25" fill="#000" /><rect x="954.5" y="489.5" width="7" height="17" fill="none" stroke="#000" stroke-width="1"/><rect x="966" y="435" width="1" height="43" fill="#000" /><rect x="966" y="482" width="1" height="14" fill="#000" /><rect x="963.5" y="478.5" width="7" height="3" fill="none" stroke="#000" stroke-width="1"/><rect x="975" y="439" width="1" height="6" fill="#000" /><rect x="975" y="478" width="1" height="18" fill="#000" /><rect x="972" y="445" width="8" height="33" fill="#000" /><rect x="972" y="455" width="8" height="1" fill="#777" /><rect x="984" y="422" width="1" height="14" fill="#000" /><rect x="981.5" y="436.5" width="7" height="41" fill="none" stroke="#000" stroke-width="1"/><rect x="993" y="392" width="1" height="17" fill="#000" /><rect x="993" y="435" width="1" height="53" fill="#000" /><rect x="990.5" y="409.5" width="7" height="25" fill="none" stroke="#000" stroke-width="1"/><rect x="1002" y="408" width="1" height="2" fill="#000" /><rect x="1002" y="455" width="1" height="1" fill="#000" /><rect x="999" y="410" width="8" height="45" fill="#000" /><rect x="1011" y="412" width="1" height="6" fill="#000" /><rect x="1011" y="455" width="1" height="7" fill="#000" /><rect x="1008.5" y="418.5" width="7" height="36" fill="none" stroke="#000" stroke-width="1"/><rect x="1020" y="432" width="1" height="20" fill="#000" /><rect x="1017" y="412" width="8" height="20" fill="#000" /><rect x="1029" y="408" width="1" height="12" fill="#000" /><rect x="1029" y="431" width="1" height="17" fill="#000" /><rect x="1026.5" y="420.5" width="7" height="10" fill="none" stroke="#000" stroke-width="1"/><rect x="1038" y="378" width="1" height="10" fill="#000" /><rect x="1038" y="421" width="1" height="13" fill="#000" /><rect x="1035.5" y="388.5" width="7" height="32" fill="none" stroke="#000" stroke-width="1"/><rect x="1047" y="377" width="1" height="8" fill="#000" /><rect x="1047" y="413" width="1" height="6" fill="#000" /><rect x="1044" y="385" width="8" height="28" fill="#000" /><rect x="1044" y="400" width="8" height="1" fill="#777" /><rect x="1056" y="394" width="1" height="24" fill="#000" /><rect x="1053" y="418" width="8" height="4" fill="#000" /><rect x="1065" y="422" width="1" height="7" fill="#000" /><rect x="1062.5" y="394.5" width="7" height="27" fill="none" stroke="#000" stroke-width="1"/><rect x="1074" y="394" width="1" height="19" fill="#000" /><rect x="1071.5" y="380.5" width="7" height="13" fill="none" stroke="#000" stroke-width="1"/><rect x="1083" y="358" width="1" height="16" fill="#000" /><rect x="1083" y="379" width="1" height="6" fill="#000" /><rect x="1080.5" y="374.5" width="7" height="4" fill="none" stroke="#000" stroke-width="1"/><rect x="1092" y="360" width="1" height="10" fill="#000" /><rect x="1089.5" y="370.5" width="7" height="3" fill="none" stroke="#000" stroke-width="1"/><rect x="1101" y="370" width="1" height="8" fill="#000" /><rect x="1098.5" y="347.5" width="7" height="22" fill="none" stroke="#000" stroke-width="1"/><rect x="1110" y="327" width="1" height="18" fill="#000" /><rect x="1110" y="348" width="1" height="18" fill="#000" /><rect x="1107.5" y="345.5" width="7" height="2" fill="none" stroke="#000" stroke-width="1"/><rect x="1119" y="343" width="1" height="2" fill="#000" /><rect x="1119" y="368" width="1" height="10" fill="#000" /><rect x="1116" y="345" width="8" height="23" fill="#000" /><rect x="1128" y="346" width="1" height="25" fill="#000" /><rect x="1125" y="371" width="8" height="8" fill="#000" /><rect x="1137" y="348" width="1" height="22" fill="#000" /><rect x="1137" y="388" width="1" height="24" fill="#000" /><rect x="1134" y="370" width="8" height="18" fill="#000" /><rect x="1146" y="378" width="1" height="9" fill="#000" /><rect x="1146" y="426" width="1" height="8" fill="#000" /><rect x="1143" y="387" width="8" height="39" fill="#000" /><rect x="1143" y="400" width="8" height="1" fill="#777" /><rect x="1155" y="389" width="1" height="14" fill="#000" /><rect x="1152.5" y="403.5" width="7" height="24" fill="none" stroke="#000" stroke-width="1"/><rect x="1164" y="395" width="1" height="8" fill="#000" /><rect x="1161" y="403" width="8" height="40" fill="#000" /><rect x="1173" y="419" width="1" height="23" fill="#000" /><rect x="1170" y="442" width="8" height="12" fill="#000" /><rect x="4" y="6" width="120" height="55" fill="#f7f7f7" /><rect x="1204" y="0" width="52" height="604" fill="#d6d5d6" /><rect x="3" y="604" width="1253" height="1" fill="#000" /><rect x="3" y="605" width="1253" height="26" fill="#d6d5d6" /><rect x="3" y="631" width="1253" height="18" fill="#eeebe7" /><rect x="956" y="325" width="56" height="56" fill="#f7f7f7" /><rect x="950" y="539" width="52" height="26" fill="#f7f7f7" /><circle cx="985" cy="478" r="4.3" fill="#f01010"/><circle cx="976" cy="468" r="4" fill="#000020" stroke="#14146a" stroke-width="1.6"/><path d="M976.5 505.5 L981 511 H979 V515.5 H974 V511 H972 Z" fill="#1010d0" stroke="#000060" stroke-width=".6"/><path d="M982 402.5 H989 V404.5 H988 V406.5 H990.5 L985.5 412 L980.5 406.5 H983 V404.5 H982 Z" fill="#28d028" stroke="#003000" stroke-width="1" shape-rendering="geometricPrecision"/></svg><div class="a" style="left:1217px;top:423px;width:49px;height:14px;background:#000;"></div><div class="a" style="left:1217px;top:568px;width:49px;height:14px;background:#000;"></div><div class="t" style="left:21px;top:130.69px;font-size:11px;font-weight:700;color:#000;font-family:'Liberation Sans';transform:scaleX(1.1498);">Главное:</div><div class="t" style="left:21px;top:144.29px;font-size:11px;font-weight:400;color:#000;font-family:'Liberation Sans';transform:scaleX(1.1437);">Источник11 [GMKN]</div><div class="t" style="left:21px;top:157.69px;font-size:11px;font-weight:400;color:#000;font-family:'Liberation Sans';transform:scaleX(1.0992);">Формула [GMKN]</div><div class="t" style="left:21px;top:170.99px;font-size:11px;font-weight:400;color:#000;font-family:'Liberation Sans';transform:scaleX(1.0748);">P [GMKN]</div><div class="t" style="left:1217px;top:128.19px;font-size:11px;font-weight:400;color:#000;font-family:'Liberation Sans';transform:scaleX(1.1463);">5&#x27;150.00</div><div class="t" style="left:1217px;top:183.74px;font-size:11px;font-weight:400;color:#000;font-family:'Liberation Sans';transform:scaleX(1.1463);">5&#x27;125.00</div><div class="t" style="left:1217px;top:239.29px;font-size:11px;font-weight:400;color:#000;font-family:'Liberation Sans';transform:scaleX(1.1463);">5&#x27;100.00</div><div class="t" style="left:1217px;top:294.84px;font-size:11px;font-weight:400;color:#000;font-family:'Liberation Sans';transform:scaleX(1.1463);">5&#x27;075.00</div><div class="t" style="left:1217px;top:350.39px;font-size:11px;font-weight:400;color:#000;font-family:'Liberation Sans';transform:scaleX(1.1463);">5&#x27;050.00</div><div class="t" style="left:1217px;top:405.94px;font-size:11px;font-weight:400;color:#000;font-family:'Liberation Sans';transform:scaleX(1.1463);">5&#x27;025.00</div><div class="t" style="left:1217px;top:461.49px;font-size:11px;font-weight:400;color:#000;font-family:'Liberation Sans';transform:scaleX(1.1463);">5&#x27;000.00</div><div class="t" style="left:1217px;top:517.04px;font-size:11px;font-weight:400;color:#000;font-family:'Liberation Sans';transform:scaleX(1.1463);">4&#x27;975.00</div><div class="t" style="left:1217px;top:628.14px;font-size:11px;font-weight:400;color:#000;font-family:'Liberation Sans';transform:scaleX(1.1463);">4&#x27;925.00</div><div class="t" style="left:1217px;top:683.69px;font-size:11px;font-weight:400;color:#000;font-family:'Liberation Sans';transform:scaleX(1.1463);">4&#x27;900.00</div><div class="t" style="left:1217px;top:424.69px;font-size:11px;font-weight:400;color:#fff;font-family:'Liberation Sans';transform:scaleX(1.1463);">5&#x27;016.52</div><div class="t" style="left:1217px;top:569.69px;font-size:11px;font-weight:400;color:#fff;font-family:'Liberation Sans';transform:scaleX(1.1463);">4&#x27;951.32</div><div class="t" style="left:34px;top:729.69px;font-size:11px;font-weight:400;color:#000;font-family:'Liberation Sans';transform:scaleX(1.1623);">18:00</div><div class="t" style="left:97px;top:729.69px;font-size:11px;font-weight:400;color:#000;font-family:'Liberation Sans';transform:scaleX(1.1623);">10:00</div><div class="t" style="left:151px;top:729.69px;font-size:11px;font-weight:400;color:#000;font-family:'Liberation Sans';transform:scaleX(1.1977);">11:00</div><div class="t" style="left:259px;top:729.69px;font-size:11px;font-weight:400;color:#000;font-family:'Liberation Sans';transform:scaleX(1.1623);">12:00</div><div class="t" style="left:367px;top:729.69px;font-size:11px;font-weight:400;color:#000;font-family:'Liberation Sans';transform:scaleX(1.1623);">13:00</div><div class="t" style="left:475px;top:729.69px;font-size:11px;font-weight:400;color:#000;font-family:'Liberation Sans';transform:scaleX(1.1623);">14:00</div><div class="t" style="left:583px;top:729.69px;font-size:11px;font-weight:400;color:#000;font-family:'Liberation Sans';transform:scaleX(1.1623);">15:00</div><div class="t" style="left:691px;top:729.69px;font-size:11px;font-weight:400;color:#000;font-family:'Liberation Sans';transform:scaleX(1.1623);">16:00</div><div class="t" style="left:799px;top:729.69px;font-size:11px;font-weight:400;color:#000;font-family:'Liberation Sans';transform:scaleX(1.1623);">17:00</div><div class="t" style="left:907px;top:729.69px;font-size:11px;font-weight:400;color:#000;font-family:'Liberation Sans';transform:scaleX(1.1623);">18:00</div><div class="t" style="left:988px;top:729.69px;font-size:11px;font-weight:400;color:#000;font-family:'Liberation Sans';transform:scaleX(1.1623);">10:00</div><div class="t" style="left:1042px;top:729.69px;font-size:11px;font-weight:400;color:#000;font-family:'Liberation Sans';transform:scaleX(1.1977);">11:00</div><div class="t" style="left:1150px;top:729.69px;font-size:11px;font-weight:400;color:#000;font-family:'Liberation Sans';transform:scaleX(1.1623);">12:00</div><div class="t" style="left:97px;top:742.69px;font-size:11px;font-weight:400;color:#000;font-family:'Liberation Sans';transform:scaleX(1.1442);">17.06.2010</div><div class="t" style="left:988px;top:742.69px;font-size:11px;font-weight:400;color:#000;font-family:'Liberation Sans';transform:scaleX(1.1442);">18.06.2010</div><div class="t" style="left:974.4px;top:446.79px;font-size:11px;font-weight:400;color:#000;font-family:'Liberation Sans';transform:scaleX(1.0865);">S 15</div><div class="t" style="left:974.4px;top:459.49px;font-size:11px;font-weight:400;color:#000;font-family:'Liberation Sans';transform:scaleX(1.1266);">4940.00</div><div class="t" style="left:974.4px;top:476.59px;font-size:11px;font-weight:400;color:#000;font-family:'Liberation Sans';transform:scaleX(1.0745);">SB 15</div><div class="t" style="left:974.4px;top:489.59px;font-size:11px;font-weight:400;color:#000;font-family:'Liberation Sans';transform:scaleX(1.1266);">4940.00</div><div class="t" style="left:965.8px;top:662.19px;font-size:11px;font-weight:400;color:#000;font-family:'Liberation Sans';transform:scaleX(1.0689);">B 15</div><div class="t" style="left:965.8px;top:676.29px;font-size:11px;font-weight:400;color:#000;font-family:'Liberation Sans';transform:scaleX(1.1165);">4944.37</div><div class="a" style="left:15px;top:754px;width:16px;height:16px;background:#d4d0c8;border-top:1px solid #fff;border-left:1px solid #fff;border-right:1px solid #404040;border-bottom:1px solid #404040;box-shadow:inset -1px -1px #808080;"></div><svg class="a" style="left:15px;top:754px" width="16" height="16" viewBox="0 0 16 16"><path d="M5 8L9 4V12z" fill="#000"/></svg><div class="a" style="left:1209px;top:754px;width:42px;height:16px;background:#d4d0c8;border-top:1px solid #fff;border-left:1px solid #fff;border-right:1px solid #404040;border-bottom:1px solid #404040;box-shadow:inset -1px -1px #808080;"></div><div class="a" style="left:1250px;top:754px;width:16px;height:16px;background:#d4d0c8;border-top:1px solid #fff;border-left:1px solid #fff;border-right:1px solid #404040;border-bottom:1px solid #404040;box-shadow:inset -1px -1px #808080;"></div><svg class="a" style="left:1250px;top:754px" width="16" height="16" viewBox="0 0 16 16"><path d="M10 8L6 4V12z" fill="#000"/></svg><div class="a" style="left:0px;top:784px;width:1280px;height:4px;background:#ebe9e5;"></div><div class="a" style="left:0px;top:787px;width:1280px;height:2px;background:#77746f;"></div><div class="a" style="left:0px;top:789px;width:1280px;height:19px;background:linear-gradient(#aec4e4,#c8d8ee 45%,#e6eef8 80%,#f4f7fb);"></div><div class="t" style="left:3px;top:793.69px;font-size:11px;font-weight:700;color:#ffffff;font-family:'Liberation Sans';transform:scaleX(1.0094);text-shadow:0 0 1.5px #fff,0 0 2.5px #fff">Сообщения</div><svg class="a" style="left:1262px;top:792px" width="13" height="12" viewBox="0 0 13 12"><path d="M1.5 1.5L11 10.5M11 1.5L1.5 10.5" stroke="#444" stroke-width="1.3"/></svg><div class="a" style="left:0px;top:808px;width:1262px;height:18px;background:#d8d5d0;"></div><div class="a" style="left:0px;top:808px;width:1px;height:160px;background:#8d8a84;"></div><div class="t" style="left:5.6px;top:812.99px;font-size:11px;font-weight:400;color:#000;font-family:'Liberation Sans';transform:scaleX(1.0425);">Время</div><div class="t" style="left:80px;top:812.99px;font-size:11px;font-weight:400;color:#000;font-family:'Liberation Sans';transform:scaleX(1.0689);">Сообщение</div><div class="a" style="left:1px;top:826px;width:1261px;height:124px;background:#fff;"></div><div class="a" style="left:1px;top:825px;width:1261px;height:2px;background:#4a4844;"></div><div class="a" style="left:1px;top:842px;width:1261px;height:1px;background:#d4d4d4;"></div><div class="a" style="left:1px;top:859px;width:1261px;height:1px;background:#d4d4d4;"></div><div class="a" style="left:1px;top:875px;width:1261px;height:1px;background:#d4d4d4;"></div><div class="a" style="left:1px;top:892px;width:1261px;height:1px;background:#d4d4d4;"></div><div class="a" style="left:1px;top:908px;width:1261px;height:1px;background:#d4d4d4;"></div><div class="a" style="left:1px;top:925px;width:1261px;height:1px;background:#d4d4d4;"></div><div class="a" style="left:1px;top:941px;width:1261px;height:1px;background:#d4d4d4;"></div><div class="a" style="left:76px;top:827px;width:1px;height:123px;background:#d4d4d4;"></div><div class="a" style="left:634px;top:827px;width:1px;height:123px;background:#d4d4d4;"></div><div class="t" style="left:4px;top:830.09px;font-size:11px;font-weight:400;color:#000;font-family:'Liberation Sans';transform:scaleX(1.1802);">12:20:02.66</div><div class="t" style="left:78.3px;top:830.09px;font-size:11px;font-weight:400;color:#000;font-family:'Liberation Sans';transform:scaleX(1.1534);">Скрипт: &#x27;gmk5h&#x27; Скрипт выполнен успешно за 47мс. (3850 баров, время 18.06.2010 12:15:00)</div><div class="t" style="left:4px;top:846.49px;font-size:11px;font-weight:400;color:#000;font-family:'Liberation Sans';transform:scaleX(1.1802);">12:15:00.18</div><div class="t" style="left:78.3px;top:846.49px;font-size:11px;font-weight:400;color:#000;font-family:'Liberation Sans';transform:scaleX(1.1534);">Скрипт: &#x27;gmk5h&#x27; Скрипт выполнен успешно за 78мс. (3849 баров, время 18.06.2010 12:10:00)</div><div class="t" style="left:4px;top:862.89px;font-size:11px;font-weight:400;color:#000;font-family:'Liberation Sans';transform:scaleX(1.1802);">12:10:04.63</div><div class="t" style="left:78.3px;top:862.89px;font-size:11px;font-weight:400;color:#000;font-family:'Liberation Sans';transform:scaleX(1.1534);">Скрипт: &#x27;gmk5h&#x27; Скрипт выполнен успешно за 16мс. (3848 баров, время 18.06.2010 12:05:00)</div><div class="t" style="left:4px;top:879.29px;font-size:11px;font-weight:400;color:#000;font-family:'Liberation Sans';transform:scaleX(1.1802);">12:05:05.82</div><div class="t" style="left:78.3px;top:879.29px;font-size:11px;font-weight:400;color:#000;font-family:'Liberation Sans';transform:scaleX(1.1534);">Скрипт: &#x27;gmk5h&#x27; Скрипт выполнен успешно за 78мс. (3847 баров, время 18.06.2010 12:00:00)</div><div class="t" style="left:4px;top:895.69px;font-size:11px;font-weight:400;color:#000;font-family:'Liberation Sans';transform:scaleX(1.1973);">11:59:59.93</div><div class="t" style="left:78.3px;top:895.69px;font-size:11px;font-weight:400;color:#000;font-family:'Liberation Sans';transform:scaleX(1.1536);">Скрипт: &#x27;роська&#x27; Скрипт выполнен успешно за 31мс. (2020 баров, время 18.06.2010 11:00:00)</div><div class="t" style="left:4px;top:912.09px;font-size:11px;font-weight:400;color:#000;font-family:'Liberation Sans';transform:scaleX(1.1973);">11:59:59.93</div><div class="t" style="left:78.3px;top:912.09px;font-size:11px;font-weight:400;color:#000;font-family:'Liberation Sans';transform:scaleX(1.1280);">Рыночная заявка 77717247 исполнена. Куплено 356 лотов ROSN. Остаток 0 лота(ов).</div><div class="t" style="left:4px;top:928.49px;font-size:11px;font-weight:400;color:#000;font-family:'Liberation Sans';transform:scaleX(1.1973);">11:59:59.91</div><div class="t" style="left:78.3px;top:928.49px;font-size:11px;font-weight:400;color:#000;font-family:'Liberation Sans';transform:scaleX(1.1279);">Сделка 814000062: Куплено 356 лотов ROSN по цене 208,3.</div><div class="a" style="left:0;top:942px;width:1262px;height:8px;overflow:hidden"><div class="t" style="left:4px;top:2.99px;font-size:11px;font-weight:400;color:#000;font-family:'Liberation Sans';transform:scaleX(1.1973);">11:59:59.91</div><div class="t" style="left:78.3px;top:2.99px;font-size:11px;font-weight:400;color:#000;font-family:'Liberation Sans';transform:scaleX(1.1176);">Заявка 77717247 на покупку 356 лотов ROSN по рыночной цене принята.</div></div><div class="a" style="left:1262px;top:808px;width:17px;height:159px;background:#f2f0ec;"></div><div class="a" style="left:1262px;top:827px;width:16px;height:16px;background:#d4d0c8;border-top:1px solid #fff;border-left:1px solid #fff;border-right:1px solid #404040;border-bottom:1px solid #404040;box-shadow:inset -1px -1px #808080;"></div><svg class="a" style="left:1262px;top:827px" width="16" height="16" viewBox="0 0 16 16"><path d="M4 10h8L8 6z" fill="#000"/></svg><div class="a" style="left:1262px;top:843px;width:16px;height:8px;background:#d4d0c8;border-top:1px solid #fff;border-left:1px solid #fff;border-right:1px solid #404040;border-bottom:1px solid #404040;box-shadow:inset -1px -1px #808080;"></div><div class="a" style="left:1262px;top:934px;width:16px;height:16px;background:#d4d0c8;border-top:1px solid #fff;border-left:1px solid #fff;border-right:1px solid #404040;border-bottom:1px solid #404040;box-shadow:inset -1px -1px #808080;"></div><svg class="a" style="left:1262px;top:934px" width="16" height="16" viewBox="0 0 16 16"><path d="M4 6h8L8 10z" fill="#000"/></svg><div class="a" style="left:1px;top:950px;width:1261px;height:17px;background:#eeebe7;"></div><div class="a" style="left:1px;top:951px;width:16px;height:16px;background:#d4d0c8;border-top:1px solid #fff;border-left:1px solid #fff;border-right:1px solid #404040;border-bottom:1px solid #404040;box-shadow:inset -1px -1px #808080;"></div><svg class="a" style="left:1px;top:951px" width="16" height="16" viewBox="0 0 16 16"><path d="M6 8L10 4V12z" fill="#a0a0a0"/></svg><div class="a" style="left:1262px;top:951px;width:16px;height:16px;background:#d4d0c8;border-top:1px solid #fff;border-left:1px solid #fff;border-right:1px solid #404040;border-bottom:1px solid #404040;box-shadow:inset -1px -1px #808080;"></div><svg class="a" style="left:1262px;top:951px" width="16" height="16" viewBox="0 0 16 16"><path d="M10 8L6 4V12z" fill="#b0b0b0"/></svg><div class="a" style="left:0px;top:967px;width:1280px;height:29px;background:#d6d3ce;"></div><div class="t" style="left:3.5px;top:976.29px;font-size:11px;font-weight:400;color:#000;font-family:'Liberation Sans';transform:scaleX(1.1043);">Подключен</div><div class="a" style="left:102px;top:970px;width:1px;height:22px;background:#8d8a84;"></div><div class="a" style="left:177px;top:970px;width:1px;height:22px;background:#8d8a84;"></div><div class="a" style="left:382px;top:970px;width:1px;height:22px;background:#8d8a84;"></div><div class="a" style="left:411px;top:970px;width:1px;height:22px;background:#8d8a84;"></div><div class="t" style="left:108px;top:976.29px;font-size:11px;font-weight:400;color:#000;font-family:'Liberation Sans';transform:scaleX(1.1393);">190 байт</div><div class="t" style="left:183px;top:976.29px;font-size:11px;font-weight:400;color:#000;font-family:'Liberation Sans';transform:scaleX(1.1789);">12:23:50 06.18.2010</div><div class="a" style="left:388px;top:972px;width:19px;height:19px;border-radius:3px;background:#6a7a6a"></div><div class="a" style="left:391px;top:975px;width:13px;height:13px;background:repeating-linear-gradient(#eef2fa 0 2px,#c8d0e8 2px 3px);border:1px solid #8898c0"></div><svg class="a" style="left:442px;top:971px" width="56" height="21" viewBox="0 0 56 21"><path d="M0.5 20.5V0.5H46Q55.5 0.5 55.5 12V20.5z" fill="#fff" stroke="#c8c5c0"/></svg><div class="t" style="left:455.6px;top:977.29px;font-size:11px;font-weight:400;color:#000;font-family:'Liberation Sans';transform:scaleX(0.9677);">SBER</div><div class="a" style="left:567px;top:971px;width:25px;height:20px;background:#d4d0c8;border-top:1px solid #fff;border-left:1px solid #fff;border-right:1px solid #404040;border-bottom:1px solid #404040;box-shadow:inset -1px -1px #808080;"></div><div class="t" style="left:575px;top:974.84px;font-size:12px;font-weight:400;color:#000;font-family:'Liberation Sans';">+</div><div class="a" style="left:0px;top:995px;width:1280px;height:1px;background:#fff;"></div><div class="a" style="left:0px;top:996px;width:1280px;height:28px;background:#d4d0c8;"></div><div class="a" style="left:1px;top:998px;width:52px;height:22px;background:#d4d0c8;border-top:1px solid #fff;border-left:1px solid #fff;border-right:1px solid #404040;border-bottom:1px solid #404040;box-shadow:inset -1px -1px #808080;"></div><svg class="a" style="left:4px;top:1000px" width="16" height="16" viewBox="0 0 16 16"><path d="M2.5 2Q5 0.5 8 1.5L7 7.5Q4.5 6.5 1.5 8z" fill="#e85a28"/><path d="M8.6 1.8Q11.5 3 14.8 1.6L13.8 7.6Q10.8 9 7.6 7.8z" fill="#5cbc2c"/><path d="M1.3 8.6Q4.3 7.2 6.9 8.2L6 14.2Q3.3 13.2 0.3 14.6z" fill="#3a78d8"/><path d="M7.5 8.5Q10.5 9.7 13.7 8.3L12.7 14.3Q9.7 15.7 6.5 14.5z" fill="#f2c014"/></svg><div class="t" style="left:22px;top:1003.69px;font-size:11px;font-weight:700;color:#000;font-family:'Liberation Sans';transform:scaleX(1.0640);">Пуск</div><div class="a" style="left:58px;top:998px;width:160px;height:22px;background:#d4d0c8;border-top:1px solid #fff;border-left:1px solid #fff;border-right:1px solid #404040;border-bottom:1px solid #404040;box-shadow:inset -1px -1px #808080;"></div><div class="a" style="left:62px;top:1001px;width:16px;height:16px;background:#1f4a6e;"></div><div class="a" style="left:64px;top:1011px;width:2px;height:4px;background:#fff;"></div><div class="a" style="left:67px;top:1009px;width:2px;height:6px;background:#fff;"></div><div class="a" style="left:70px;top:1007px;width:2px;height:8px;background:#f0d020;"></div><div class="a" style="left:73px;top:1004px;width:2px;height:11px;background:#fff;"></div><div class="t" style="left:82px;top:1004.69px;font-size:11px;font-weight:400;color:#000;font-family:'Liberation Sans';transform:scaleX(1.0056);">TSLab (версия 1.1.7.0) ...</div><div class="a" style="left:221px;top:998px;width:159px;height:22px;background:#e8e6e2;border-top:1px solid #404040;border-left:1px solid #404040;border-right:1px solid #fff;border-bottom:1px solid #fff;box-shadow:inset 1px 1px #808080"></div><svg class="a" style="left:226px;top:1001px" width="17" height="17" viewBox="0 0 17 17"><rect x="1.5" y="1.5" width="13" height="10" fill="#c8c8c8" stroke="#404040"/><rect x="3" y="3" width="10" height="7" fill="#103010"/><path d="M4 8l2-2 2 2 2-3 2 2" stroke="#40e040" fill="none"/><rect x="0.5" y="12.5" width="16" height="4" fill="#d8d8d8" stroke="#404040"/></svg><div class="t" style="left:246px;top:1005.29px;font-size:11px;font-weight:700;color:#000;font-family:'Liberation Sans';transform:scaleX(1.0920);">Диспетчер задач Wi...</div><div class="a" style="left:1158px;top:1002px;width:16px;height:16px;background:#0a246a;"></div><div class="t" style="left:1160px;top:1005.53px;font-size:10px;font-weight:400;color:#fff;font-family:'Liberation Sans';transform:scaleX(0.8303);">RU</div><div class="a" style="left:1178px;top:998px;width:1px;height:23px;background:#8d8a84;"></div><div class="a" style="left:1179px;top:998px;width:1px;height:23px;background:#fff;"></div><div class="a" style="left:1183px;top:998px;width:95px;height:24px;border-top:1px solid #808080;border-left:1px solid #808080;border-right:1px solid #fff;border-bottom:1px solid #fff"></div><div class="t" style="left:1188px;top:1003.84px;font-size:12px;font-weight:700;color:#000;font-family:'Liberation Sans';transform:scaleX(1.1963);">«</div><div class="a" style="left:1203px;top:1003px;width:12px;height:13px;background-color:#0a8a0a;background-image:repeating-linear-gradient(90deg,transparent 0 2px,#003000 2px 3px),repeating-linear-gradient(transparent 0 2px,#003000 2px 3px);border:1px solid #e0ffe0"></div><svg class="a" style="left:1220px;top:1002px" width="14" height="16" viewBox="0 0 14 16"><path d="M7 0.5L13 3V8Q13 13 7 15.5Q1 13 1 8V3z" fill="#d02828" stroke="#909090"/><path d="M4.5 5.5L9.5 10.5M9.5 5.5L4.5 10.5" stroke="#fff" stroke-width="1.6"/></svg><div class="t" style="left:1242px;top:1004.19px;font-size:11px;font-weight:400;color:#000;font-family:'Liberation Sans';transform:scaleX(0.9807);">12:23</div><div class="a" style="left:243px;top:160px;width:413px;height:454px;background:#d4d0c8;border-top:1px solid #d4d0c8;border-left:1px solid #d4d0c8;border-right:1px solid #404040;border-bottom:1px solid #404040;box-shadow:inset 1px 1px #fff,inset -1px -1px #808080"></div><div class="a" style="left:247px;top:164px;width:405px;height:18px;background:#0a246a;"></div><svg class="a" style="left:250px;top:165px" width="15" height="15" viewBox="0 0 15 15"><rect x="1.5" y="1.5" width="12" height="9" fill="#c8c8c8" stroke="#e8e8e8"/><rect x="3" y="3" width="9" height="6" fill="#103010"/><path d="M3.5 7l2-2 2 2 2-2.5 2 2" stroke="#40e040" fill="none"/><rect x="0.5" y="11.5" width="14" height="3" fill="#e0e0e0" stroke="#808080"/></svg><div class="t" style="left:267px;top:167.84px;font-size:12px;font-weight:700;color:#fff;font-family:'Liberation Sans';transform:scaleX(0.9944);">Диспетчер задач Windows</div><div class="a" style="left:600px;top:166px;width:16px;height:14px;background:#d4d0c8;border-top:1px solid #fff;border-left:1px solid #fff;border-right:1px solid #404040;border-bottom:1px solid #404040;box-shadow:inset -1px -1px #808080;"></div><div class="a" style="left:616px;top:166px;width:16px;height:14px;background:#d4d0c8;border-top:1px solid #fff;border-left:1px solid #fff;border-right:1px solid #404040;border-bottom:1px solid #404040;box-shadow:inset -1px -1px #808080;"></div><div class="a" style="left:634px;top:166px;width:16px;height:14px;background:#d4d0c8;border-top:1px solid #fff;border-left:1px solid #fff;border-right:1px solid #404040;border-bottom:1px solid #404040;box-shadow:inset -1px -1px #808080;"></div><div class="a" style="left:604px;top:175px;width:6px;height:2px;background:#000;"></div><div class="a" style="left:619px;top:168px;width:9px;height:9px;border:1px solid #000;border-top-width:2px"></div><svg class="a" style="left:634px;top:166px" width="16" height="14" viewBox="0 0 16 14"><path d="M4.5 3.5L11 10M11 3.5L4.5 10" stroke="#000" stroke-width="1.6"/></svg><div class="t" style="left:252.8px;top:186.59px;font-size:11px;font-weight:400;color:#000;font-family:'Liberation Sans';transform:scaleX(0.9243);">Файл</div><div class="t" style="left:290.3px;top:186.59px;font-size:11px;font-weight:400;color:#000;font-family:'Liberation Sans';transform:scaleX(0.9720);">Параметры</div><div class="t" style="left:359.4px;top:186.59px;font-size:11px;font-weight:400;color:#000;font-family:'Liberation Sans';transform:scaleX(0.9294);">Вид</div><div class="t" style="left:390.3px;top:186.59px;font-size:11px;font-weight:400;color:#000;font-family:'Liberation Sans';transform:scaleX(0.9768);">Завершение работы</div><div class="t" style="left:505.3px;top:186.59px;font-size:11px;font-weight:400;color:#000;font-family:'Liberation Sans';transform:scaleX(0.9871);">Справка</div><div class="a" style="left:247px;top:202px;width:405px;height:1px;background:#808080;"></div><div class="a" style="left:247px;top:203px;width:405px;height:1px;background:#fff;"></div><div class="a" style="left:252px;top:227px;width:395px;height:358px;background:#d4d0c8;border-top:1px solid #fff;border-left:1px solid #fff;border-right:1px solid #404040;border-bottom:1px solid #404040;box-shadow:inset -1px -1px #808080"></div><div class="a" style="left:254px;top:209px;width:74px;height:18px;background:#d4d0c8;border-top:1px solid #fff;border-left:1px solid #fff;border-right:1px solid #404040;border-radius:2px 2px 0 0;box-shadow:inset -1px 0 #808080"></div><div class="t" style="left:259.2px;top:213.89px;font-size:11px;font-weight:400;color:#000;font-family:'Liberation Sans';transform:scaleX(0.9773);">Приложения</div><div class="a" style="left:391px;top:209px;width:96px;height:18px;background:#d4d0c8;border-top:1px solid #fff;border-left:1px solid #fff;border-right:1px solid #404040;border-radius:2px 2px 0 0;box-shadow:inset -1px 0 #808080"></div><div class="t" style="left:395.5px;top:213.89px;font-size:11px;font-weight:400;color:#000;font-family:'Liberation Sans';transform:scaleX(1.0061);">Быстродействие</div><div class="a" style="left:487px;top:209px;width:42px;height:18px;background:#d4d0c8;border-top:1px solid #fff;border-left:1px solid #fff;border-right:1px solid #404040;border-radius:2px 2px 0 0;box-shadow:inset -1px 0 #808080"></div><div class="t" style="left:492.4px;top:213.89px;font-size:11px;font-weight:400;color:#000;font-family:'Liberation Sans';transform:scaleX(0.9849);">Сеть</div><div class="a" style="left:529px;top:209px;width:84px;height:18px;background:#d4d0c8;border-top:1px solid #fff;border-left:1px solid #fff;border-right:1px solid #404040;border-radius:2px 2px 0 0;box-shadow:inset -1px 0 #808080"></div><div class="t" style="left:534.5px;top:213.89px;font-size:11px;font-weight:400;color:#000;font-family:'Liberation Sans';transform:scaleX(0.9931);">Пользователи</div><div class="a" style="left:327px;top:207px;width:65px;height:21px;background:#d4d0c8;border-top:1px solid #fff;border-left:1px solid #fff;border-right:1px solid #404040;border-radius:2px 2px 0 0;box-shadow:inset -1px 0 #808080"></div><div class="t" style="left:334.5px;top:212.29px;font-size:11px;font-weight:400;color:#000;font-family:'Liberation Sans';transform:scaleX(0.9544);">Процессы</div><div class="a" style="left:271px;top:245px;width:360px;height:294px;background:#fff;border-top:1px solid #808080;border-left:1px solid #808080;border-right:1px solid #fff;border-bottom:1px solid #fff;box-shadow:inset 1px 1px #404040"></div><div class="a" style="left:273px;top:247px;width:357px;height:16px;background:#d4d0c8;"></div><div class="a" style="left:273px;top:247px;width:106px;height:16px;border-top:1px solid #fff;border-left:1px solid #fff;border-right:1px solid #404040;border-bottom:1px solid #404040;box-shadow:inset -1px -1px #808080"></div><div class="a" style="left:379px;top:247px;width:107px;height:16px;border-top:1px solid #fff;border-left:1px solid #fff;border-right:1px solid #404040;border-bottom:1px solid #404040;box-shadow:inset -1px -1px #808080"></div><div class="a" style="left:486px;top:247px;width:35px;height:16px;border-top:1px solid #fff;border-left:1px solid #fff;border-right:1px solid #404040;border-bottom:1px solid #404040;box-shadow:inset -1px -1px #808080"></div><div class="a" style="left:521px;top:247px;width:70px;height:16px;border-top:1px solid #fff;border-left:1px solid #fff;border-right:1px solid #404040;border-bottom:1px solid #404040;box-shadow:inset -1px -1px #808080"></div><div class="a" style="left:591px;top:247px;width:39px;height:16px;border-top:1px solid #fff;border-left:1px solid #fff;border-right:1px solid #404040;border-bottom:1px solid #404040;box-shadow:inset -1px -1px #808080"></div><div class="t" style="left:277.5px;top:249.89px;font-size:11px;font-weight:400;color:#000;font-family:'Liberation Sans';transform:scaleX(0.9304);">Имя образа</div><div class="t" style="left:384.3px;top:249.89px;font-size:11px;font-weight:400;color:#000;font-family:'Liberation Sans';transform:scaleX(0.9985);">Имя пользователя</div><div class="t" style="left:499.3px;top:249.89px;font-size:11px;font-weight:400;color:#000;font-family:'Liberation Sans';transform:scaleX(0.9348);">ЦП</div><div class="t" style="left:547.4px;top:249.89px;font-size:11px;font-weight:400;color:#000;font-family:'Liberation Sans';transform:scaleX(0.9553);">Память</div><div class="t" style="left:277.5px;top:264.79px;font-size:11px;font-weight:400;color:#000;font-family:'Liberation Sans';transform:scaleX(0.9500);">taskmgr.exe</div><div class="t" style="left:384.3px;top:264.79px;font-size:11px;font-weight:400;color:#000;font-family:'Liberation Sans';transform:scaleX(0.9500);">tslab</div><div class="t" style="left:499.5px;top:264.79px;font-size:11px;font-weight:400;color:#000;font-family:'Liberation Sans';transform:scaleX(0.9796);">00</div><div class="t" style="left:541.55px;top:264.79px;font-size:11px;font-weight:400;color:#000;font-family:'Liberation Sans';transform:scaleX(0.9600);">4 424 КБ</div><div class="t" style="left:277.5px;top:278.79px;font-size:11px;font-weight:400;color:#000;font-family:'Liberation Sans';transform:scaleX(0.9500);">csrss.exe</div><div class="t" style="left:384.3px;top:278.79px;font-size:11px;font-weight:400;color:#000;font-family:'Liberation Sans';transform:scaleX(0.9500);">SYSTEM</div><div class="t" style="left:499.5px;top:278.79px;font-size:11px;font-weight:400;color:#000;font-family:'Liberation Sans';transform:scaleX(0.9796);">00</div><div class="t" style="left:542.33px;top:278.79px;font-size:11px;font-weight:400;color:#000;font-family:'Liberation Sans';transform:scaleX(0.9600);">3 116 КБ</div><div class="a" style="left:275px;top:291px;width:316px;height:14px;background:#0a246a;"></div><div class="t" style="left:277.5px;top:292.79px;font-size:11px;font-weight:400;color:#fff;font-family:'Liberation Sans';transform:scaleX(0.9500);">TSLabApp.exe</div><div class="t" style="left:384.3px;top:292.79px;font-size:11px;font-weight:400;color:#fff;font-family:'Liberation Sans';transform:scaleX(0.9500);">tslab</div><div class="t" style="left:499.5px;top:292.79px;font-size:11px;font-weight:400;color:#fff;font-family:'Liberation Sans';transform:scaleX(0.9796);">00</div><div class="t" style="left:529.805px;top:292.79px;font-size:11px;font-weight:400;color:#fff;font-family:'Liberation Sans';transform:scaleX(0.9600);">136 692 КБ</div><div class="t" style="left:277.5px;top:306.79px;font-size:11px;font-weight:400;color:#000;font-family:'Liberation Sans';transform:scaleX(0.9500);">ctfmon.exe</div><div class="t" style="left:384.3px;top:306.79px;font-size:11px;font-weight:400;color:#000;font-family:'Liberation Sans';transform:scaleX(0.9500);">tslab</div><div class="t" style="left:499.5px;top:306.79px;font-size:11px;font-weight:400;color:#000;font-family:'Liberation Sans';transform:scaleX(0.9796);">00</div><div class="t" style="left:541.55px;top:306.79px;font-size:11px;font-weight:400;color:#000;font-family:'Liberation Sans';transform:scaleX(0.9600);">3 260 КБ</div><div class="t" style="left:277.5px;top:320.79px;font-size:11px;font-weight:400;color:#000;font-family:'Liberation Sans';transform:scaleX(0.9500);">VMwareUser.exe</div><div class="t" style="left:384.3px;top:320.79px;font-size:11px;font-weight:400;color:#000;font-family:'Liberation Sans';transform:scaleX(0.9500);">tslab</div><div class="t" style="left:499.5px;top:320.79px;font-size:11px;font-weight:400;color:#000;font-family:'Liberation Sans';transform:scaleX(0.9796);">00</div><div class="t" style="left:541.55px;top:320.79px;font-size:11px;font-weight:400;color:#000;font-family:'Liberation Sans';transform:scaleX(0.9600);">4 348 КБ</div><div class="t" style="left:277.5px;top:334.79px;font-size:11px;font-weight:400;color:#000;font-family:'Liberation Sans';transform:scaleX(0.9500);">VMwareTray.exe</div><div class="t" style="left:384.3px;top:334.79px;font-size:11px;font-weight:400;color:#000;font-family:'Liberation Sans';transform:scaleX(0.9500);">tslab</div><div class="t" style="left:499.5px;top:334.79px;font-size:11px;font-weight:400;color:#000;font-family:'Liberation Sans';transform:scaleX(0.9796);">00</div><div class="t" style="left:541.55px;top:334.79px;font-size:11px;font-weight:400;color:#000;font-family:'Liberation Sans';transform:scaleX(0.9600);">3 180 КБ</div><div class="t" style="left:277.5px;top:348.79px;font-size:11px;font-weight:400;color:#000;font-family:'Liberation Sans';transform:scaleX(0.9500);">rdpclip.exe</div><div class="t" style="left:384.3px;top:348.79px;font-size:11px;font-weight:400;color:#000;font-family:'Liberation Sans';transform:scaleX(0.9500);">tslab</div><div class="t" style="left:499.5px;top:348.79px;font-size:11px;font-weight:400;color:#000;font-family:'Liberation Sans';transform:scaleX(0.9796);">00</div><div class="t" style="left:541.55px;top:348.79px;font-size:11px;font-weight:400;color:#000;font-family:'Liberation Sans';transform:scaleX(0.9600);">4 100 КБ</div><div class="t" style="left:277.5px;top:362.79px;font-size:11px;font-weight:400;color:#000;font-family:'Liberation Sans';transform:scaleX(0.9500);">wscntfy.exe</div><div class="t" style="left:384.3px;top:362.79px;font-size:11px;font-weight:400;color:#000;font-family:'Liberation Sans';transform:scaleX(0.9500);">tslab</div><div class="t" style="left:499.5px;top:362.79px;font-size:11px;font-weight:400;color:#000;font-family:'Liberation Sans';transform:scaleX(0.9796);">00</div><div class="t" style="left:541.55px;top:362.79px;font-size:11px;font-weight:400;color:#000;font-family:'Liberation Sans';transform:scaleX(0.9600);">2 136 КБ</div><div class="t" style="left:277.5px;top:376.79px;font-size:11px;font-weight:400;color:#000;font-family:'Liberation Sans';transform:scaleX(0.9500);">explorer.exe</div><div class="t" style="left:384.3px;top:376.79px;font-size:11px;font-weight:400;color:#000;font-family:'Liberation Sans';transform:scaleX(0.9500);">tslab</div><div class="t" style="left:499.5px;top:376.79px;font-size:11px;font-weight:400;color:#000;font-family:'Liberation Sans';transform:scaleX(0.9796);">00</div><div class="t" style="left:536.465px;top:376.79px;font-size:11px;font-weight:400;color:#000;font-family:'Liberation Sans';transform:scaleX(0.9600);">11 640 КБ</div><div class="t" style="left:277.5px;top:390.79px;font-size:11px;font-weight:400;color:#000;font-family:'Liberation Sans';transform:scaleX(0.9500);">winlogon.exe</div><div class="t" style="left:384.3px;top:390.79px;font-size:11px;font-weight:400;color:#000;font-family:'Liberation Sans';transform:scaleX(0.9500);">SYSTEM</div><div class="t" style="left:499.5px;top:390.79px;font-size:11px;font-weight:400;color:#000;font-family:'Liberation Sans';transform:scaleX(0.9796);">00</div><div class="t" style="left:541.55px;top:390.79px;font-size:11px;font-weight:400;color:#000;font-family:'Liberation Sans';transform:scaleX(0.9600);">5 088 КБ</div><div class="a" style="left:271px;top:547px;width:13px;height:13px;background:#fff;border-top:1px solid #808080;border-left:1px solid #808080;border-right:1px solid #fff;border-bottom:1px solid #fff;box-shadow:inset 1px 1px #404040"></div><div class="t" style="left:288.5px;top:549.29px;font-size:11px;font-weight:400;color:#000;font-family:'Liberation Sans';transform:scaleX(1.0080);">Отображать процессы всех пользователей</div><div class="a" style="left:518px;top:546px;width:113px;height:23px;background:#d4d0c8;border-top:1px solid #fff;border-left:1px solid #fff;border-right:1px solid #404040;border-bottom:1px solid #404040;box-shadow:inset -1px -1px #808080;"></div><div class="t" style="left:524.2px;top:551.89px;font-size:11px;font-weight:400;color:#000;font-family:'Liberation Sans';transform:scaleX(0.9802);">Завершить процесс</div><div class="a" style="left:247px;top:592px;width:95px;height:18px;background:#d4d0c8;border-top:1px solid #808080;border-left:1px solid #808080;border-right:1px solid #fff;border-bottom:1px solid #fff;box-shadow:inset 1px 1px #404040;box-shadow:none"></div><div class="a" style="left:345px;top:592px;width:117px;height:18px;background:#d4d0c8;border-top:1px solid #808080;border-left:1px solid #808080;border-right:1px solid #fff;border-bottom:1px solid #fff;box-shadow:inset 1px 1px #404040;box-shadow:none"></div><div class="a" style="left:465px;top:592px;width:187px;height:18px;background:#d4d0c8;border-top:1px solid #808080;border-left:1px solid #808080;border-right:1px solid #fff;border-bottom:1px solid #fff;box-shadow:inset 1px 1px #404040;box-shadow:none"></div><div class="t" style="left:248.5px;top:595.69px;font-size:11px;font-weight:400;color:#000;font-family:'Liberation Sans';transform:scaleX(0.9611);">Процессов: 32</div><div class="t" style="left:346px;top:595.69px;font-size:11px;font-weight:400;color:#000;font-family:'Liberation Sans';transform:scaleX(1.0281);">Загрузка ЦП: 0%</div><div class="t" style="left:466.5px;top:595.69px;font-size:11px;font-weight:400;color:#000;font-family:'Liberation Sans';transform:scaleX(0.9756);">Выделение памяти: 259МБ / 6</div><svg class="a" style="left:640px;top:598px" width="12" height="12" viewBox="0 0 12 12"><path d="M11 1L1 11M11 5L5 11M11 9L9 11" stroke="#fff"/><path d="M11 2L2 11M11 6L6 11M11 10L10 11" stroke="#808080"/></svg></body></html>
